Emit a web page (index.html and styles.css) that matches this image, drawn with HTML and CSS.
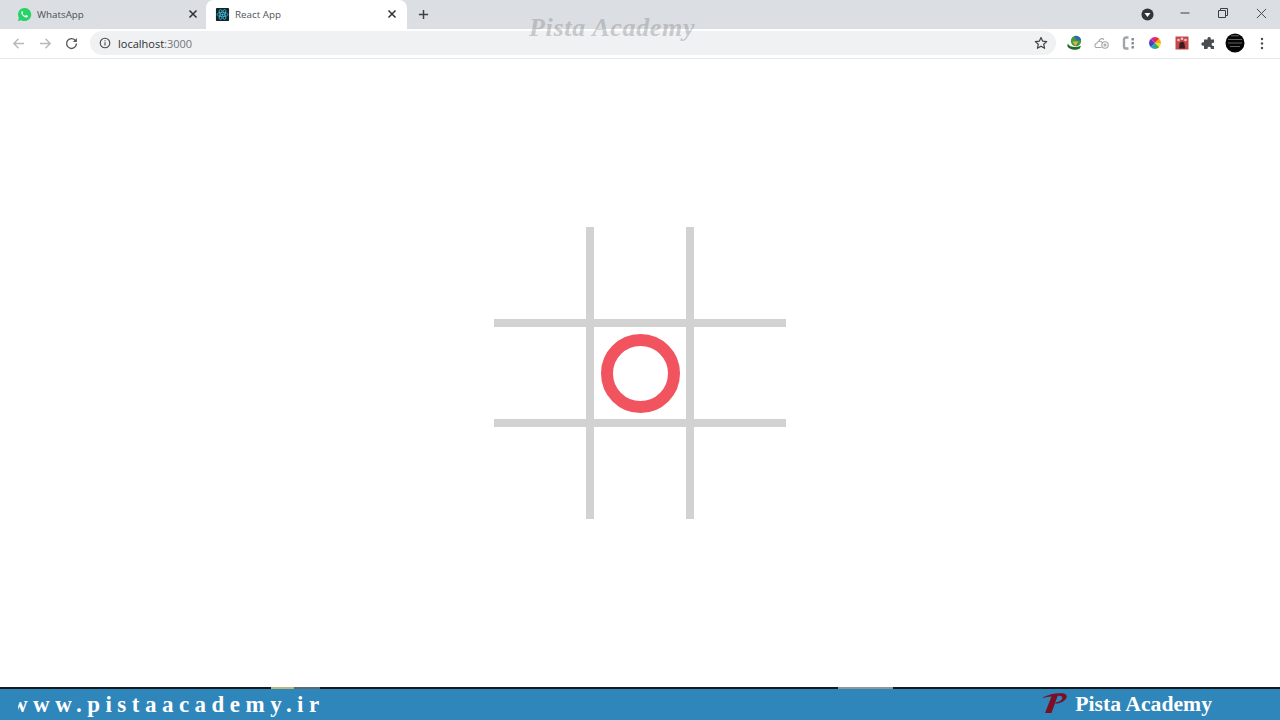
FILE: index.html
```html
<!DOCTYPE html>
<html lang="en">
<head>
<meta charset="utf-8">
<title>React App</title>
<link rel="stylesheet" href="styles.css">
</head>
<body>
<div class="page">
  <header class="chrome">
    <div class="tabstrip">
      <div class="tab">
        <svg class="favicon" viewBox="0 0 16 16"><path fill="#25d366" d="M8 1a7 7 0 0 0-6 10.500L1 15l3.600-1A7 7 0 1 0 8 1z"/><path fill="#fff" d="M5.700 4.200c-.3 0-.8.300-1 .8-.4 1 0 2.300 1 3.500 1.100 1.400 2.500 2.400 3.900 2.600.9.100 1.700-.4 1.900-1.100.1-.4.100-.7 0-.8l-1.600-.8c-.2-.1-.3 0-.4.100l-.6.800c-.1.100-.3.100-.4.100-1-.4-2-1.200-2.500-2.200-.1-.2 0-.3.100-.4l.4-.5c.1-.2.100-.3 0-.5l-.6-1.400c-.1-.2-.2-.2-.4-.2z"/></svg>
        <span class="tab-title">WhatsApp</span>
        <svg class="tab-close" viewBox="0 0 10 10"><path d="M1.500 1.500l7 7M8.500 1.500l-7 7"/></svg>
      </div>
      <div class="tab tab-active">
        <svg class="favicon" viewBox="0 0 16 16"><rect x="1" y="1" width="14" height="14" rx="1" fill="#10252c"/><g fill="none" stroke="#49c6e0" stroke-width=".8"><ellipse cx="8" cy="8" rx="5.800" ry="2.300"/><ellipse cx="8" cy="8" rx="5.800" ry="2.300" transform="rotate(60 8 8)"/><ellipse cx="8" cy="8" rx="5.800" ry="2.300" transform="rotate(120 8 8)"/></g><circle cx="8" cy="8" r="1.200" fill="#49c6e0"/></svg>
        <span class="tab-title">React App</span>
        <svg class="tab-close" viewBox="0 0 10 10"><path d="M1.500 1.500l7 7M8.500 1.500l-7 7"/></svg>
      </div>
      <svg class="new-tab" viewBox="0 0 12 12"><path d="M6 1v10M1 6h10"/></svg>
      <div class="window-controls">
        <svg class="profile-down" viewBox="0 0 14 14"><circle cx="7" cy="7" r="6.500" fill="#32363a"/><path d="M3.800 5.500h6.400L7 9.800z" fill="#fff"/></svg>
        <svg class="win-min" viewBox="0 0 10 10"><path d="M.5 5h9"/></svg>
        <svg class="win-max" viewBox="0 0 10 10"><path d="M.5 2.500h7v7h-7zM2.500 2.500v-2h7v7h-2"/></svg>
        <svg class="win-close" viewBox="0 0 12 12"><path d="M1 1l10 10M11 1L1 11"/></svg>
      </div>
    </div>
    <div class="toolbar">
      <div class="nav">
        <svg class="nav-icon nav-off" viewBox="0 0 14 14"><path d="M13 7H2M7 2L2 7l5 5"/></svg>
        <svg class="nav-icon nav-off" viewBox="0 0 14 14"><path d="M1 7h11M7 2l5 5-5 5"/></svg>
        <svg class="nav-icon" viewBox="0 0 14 14"><path d="M11.500 4.200A5.300 5.300 0 1 0 12.300 7"/><path class="solid" d="M12.800 1v4.300H8.500z"/></svg>
      </div>
      <div class="omnibox">
        <svg class="info" viewBox="0 0 12 12"><circle cx="6" cy="6" r="4.800"/><path d="M6 5.300v3.200M6 3.300v1"/></svg>
        <span class="url">localhost<span class="url-port">:3000</span></span>
        <svg class="star" viewBox="0 0 14 14"><path d="M7 1.500l1.700 3.700 4 .4-3 2.700.9 4L7 10.200l-3.600 2.100.9-4-3-2.700 4-.4z"/></svg>
      </div>
      <div class="actions">
        <span class="action"><svg viewBox="0 0 16 16" class="ext"><circle cx="9" cy="6" r="5.200" fill="#3e9a45"/><path d="M7 1.200a5.200 5.200 0 0 1 7 4l-4 .3-1.500-2.500z" fill="#2f66b8"/><path d="M.8 8.500c1.500 3.500 7.500 4.800 13.200 2.300l-1.200 2.700c-4 2.200-10.500 1.700-12.500-2.500z" fill="#1f6a27"/><path d="M5.500 6.500h6L8.300 11z" fill="#e3b437"/></svg></span>
        <span class="action"><svg viewBox="0 0 16 16" class="ext"><g fill="none" stroke="#a3a6a9" stroke-width="1.100"><circle cx="11" cy="10" r="3.200"/><circle cx="11" cy="10" r="1"/><path d="M8.500 8a3 3 0 0 0-5.500 0 2.500 2.500 0 0 0-1 4.500h5.500M5 6a3 3 0 0 1 5-1.500"/></g></svg></span>
        <span class="action"><svg viewBox="0 0 16 16" class="ext"><path d="M7.500 2.500H5a2 2 0 0 0-2 2v7a2 2 0 0 0 2 2h2.500" fill="none" stroke="#a2a5a8" stroke-width="2.400"/><rect x="10.500" y="3" width="2.400" height="2.500" fill="#85888b"/><rect x="10.500" y="7" width="2.400" height="2.500" fill="#85888b"/><rect x="10.500" y="11" width="2.400" height="2.500" fill="#85888b"/></svg></span>
        <span class="action"><svg viewBox="0 0 16 16" class="ext"><path d="M8 8V2a6 6 0 0 1 4.200 1.800z" fill="#e5332a"/><path d="M8 8l4.200-4.200A6 6 0 0 1 14 8z" fill="#f5a623"/><path d="M8 8h6a6 6 0 0 1-1.800 4.200z" fill="#f5e31f"/><path d="M8 8l4.200 4.200A6 6 0 0 1 8 14z" fill="#3cb043"/><path d="M8 8v6a6 6 0 0 1-4.200-1.800z" fill="#1fa6c9"/><path d="M8 8l-4.200 4.200A6 6 0 0 1 2 8z" fill="#2b4fc7"/><path d="M8 8H2a6 6 0 0 1 1.800-4.200z" fill="#7a2fb5"/><path d="M8 8L3.800 3.800A6 6 0 0 1 8 2z" fill="#d6249f"/></svg></span>
        <span class="action"><svg viewBox="0 0 16 16" class="ext"><rect x="1.500" y="1.500" width="13" height="13" fill="#c5484a"/><path d="M5 13.500l.6-5.500 2.200-1.500 2.400 1 1 6z" fill="#3a1c1e"/><circle cx="4.500" cy="5" r="1.300" fill="#f0c9c9"/><circle cx="8" cy="3.800" r="1.300" fill="#f0c9c9"/><circle cx="11.500" cy="5" r="1.300" fill="#f0c9c9"/></svg></span>
        <span class="action"><svg viewBox="0 0 16 16" class="ext"><path fill="#4a4d50" d="M6.500 3.300a1.700 1.700 0 0 1 3.300 0V4.500H13v3.200h-1.100a1.700 1.700 0 0 0 0 3.300H13V14H9.800v-1a1.700 1.700 0 0 0-3.300 0v1H3v-3.300H2a1.700 1.700 0 0 1 0-3.400h1V4.500h3.500z"/></svg></span>
        <span class="action"><svg viewBox="0 0 20 20" class="avatar"><circle cx="10" cy="10" r="9.500" fill="#050505"/><path d="M6 2.800h8M3 6.500h14M3 10h14M5 13.500h10" stroke="#8d8d8d" stroke-width=".7"/></svg></span>
        <span class="action"><svg viewBox="0 0 4 14" class="kebab"><circle cx="2" cy="2.200" r="1.300"/><circle cx="2" cy="7" r="1.300"/><circle cx="2" cy="11.800" r="1.300"/></svg></span>
      </div>
    </div>
  </header>
  <span class="watermark">Pista Academy</span>
  <main class="content">
    <div class="board">
      <div class="cell"></div><div class="cell"></div><div class="cell"></div>
      <div class="cell"></div><div class="cell"><div class="ring"></div></div><div class="cell"></div>
      <div class="cell"></div><div class="cell"></div><div class="cell"></div>
    </div>
  </main>
  <footer class="banner">
    <span class="seek seek-yellow"></span>
    <span class="seek seek-faint"></span>
    <span class="seek seek-grey"></span>
    <span class="site"><span class="site-text">www.pistaacademy.ir</span></span>
    <div class="brand">
      <svg class="brand-logo" viewBox="0 0 24 20"><path fill="#7d0f24" d="M0 4.500C5 1.500 13 0 19 .3c4 .2 5.500 2 4.500 4.500-1.300 3.300-6 5.700-11.500 6l1.200-1.600c3.300-.5 5.600-2 6.100-4 .3-1.300-.5-2.100-2.200-2.300-.8-.1-1.700-.1-2.500 0L8.500 20H2L8.500 3.500C5.500 3.700 2.500 4.300 0 5.200z"/></svg>
      <span class="brand-name">Pista Academy</span>
    </div>
  </footer>
</div>
</body>
</html>
```
FILE: styles.css
```css
* { box-sizing: border-box; }
html, body { margin: 0; height: 100%; overflow: hidden; background: #fff; }
svg { display: block; flex: none; }

.page {
  position: relative;
  width: 1280px;
  height: 720px;
  display: flex;
  flex-direction: column;
  font-family: "Open Sans", "Liberation Sans", sans-serif;
}

/* Browser chrome */
.chrome { flex: none; }
.tabstrip {
  height: 29px;
  background: #dbdfe3;
  display: flex;
  align-items: center;
  padding-left: 8px;
}
.tab {
  width: 198px;
  height: 29px;
  display: flex;
  align-items: center;
  padding: 0 8px 1px 9px;
  font-size: 9.800px;
  color: #4b4f53;
}
.tab-active {
  width: 201px;
  background: #fff;
  border-radius: 8px 8px 0 0;
  padding: 0 10px 1px 9px;
  color: #50545a;
}
.favicon { width: 15px; height: 15px; margin-right: 5px; }
.tab-title { flex: 1; white-space: nowrap; }
.tab-close { width: 10px; height: 10px; }
.tab-close path { stroke: #2c2f33; stroke-width: 1.500; fill: none; }
.new-tab { width: 11px; height: 11px; margin-left: 11px; }
.new-tab path { stroke: #3d4043; stroke-width: 1.600; fill: none; }

.window-controls {
  margin-left: auto;
  display: flex;
  align-items: center;
  padding-right: 13px;
}
.profile-down { width: 13px; height: 13px; margin-right: 26px; }
.win-min { width: 10px; height: 10px; margin-right: 28px; margin-top: -4px; }
.win-max { width: 10px; height: 10px; margin-right: 28px; margin-top: -3px; }
.win-close { width: 11px; height: 11px; margin-top: -3px; }
.win-min path, .win-max path, .win-close path { stroke: #3d4043; stroke-width: 1; fill: none; }

.toolbar {
  height: 30px;
  background: #fff;
  border-bottom: 1px solid #e6e8ea;
  display: flex;
  align-items: center;
  padding: 0 4.670px 1px 5px;
}
.nav { display: flex; align-items: center; }
.nav-icon { width: 13px; height: 13px; margin: 0 7px; }
.nav-icon:last-child { margin-left: 6px; margin-right: 8px; }
.nav-icon path { stroke: #55585b; stroke-width: 1.500; fill: none; }
.nav-icon path.solid { fill: #55585b; stroke: none; }
.nav-off path { stroke: #b6b9bc; }
.nav + .omnibox { margin-left: 4px; }
.omnibox {
  flex: 1;
  height: 24px;
  background: #eff1f2;
  border-radius: 12px;
  display: flex;
  align-items: center;
  padding: 0 8px 0 9px;
}
.info { width: 12px; height: 12px; margin-right: 7px; }
.info circle, .info path { stroke: #45484b; stroke-width: 1.100; fill: none; }
.url { flex: 1; font-size: 11px; color: #2c2f33; }
.url-port { color: #72767a; }
.star { width: 14px; height: 14px; }
.star path { stroke: #3f4245; stroke-width: 1.200; fill: none; stroke-linejoin: round; }
.actions { display: flex; margin-left: 6px; }
.action {
  width: 26.670px;
  display: flex;
  align-items: center;
  justify-content: center;
}
.ext { width: 16px; height: 16px; }
.avatar { width: 20px; height: 20px; }
.kebab { width: 4px; height: 13px; fill: #4a4d50; }

.watermark {
  position: absolute;
  left: 529px;
  top: 13px;
  font-family: "Liberation Serif", serif;
  font-weight: 700;
  font-style: italic;
  font-size: 26px;
  letter-spacing: .7px;
  color: rgba(130, 134, 138, .4);
  white-space: nowrap;
}

/* Game board */
.content {
  flex: 1;
  display: flex;
  align-items: center;
  justify-content: center;
  background: #fff;
}
.board {
  display: grid;
  grid-template-columns: repeat(3, 92px);
  grid-template-rows: repeat(3, 92px);
  gap: 8px;
  background: #d2d2d2;
}
.cell {
  background: #fff;
  display: flex;
  align-items: center;
  justify-content: center;
}
.ring {
  width: 79px;
  height: 79px;
  border: 12.500px solid #f1545f;
  border-radius: 50%;
}

/* Video banner */
.banner {
  position: relative;
  flex: none;
  height: 33px;
  background: #2f86ba;
  border-top: 2px solid #15191c;
  display: flex;
  align-items: center;
  justify-content: space-between;
  padding: 0 68px 0 18px;
  color: #fff;
  font-family: "Liberation Serif", serif;
  font-weight: 700;
}
.seek { position: absolute; top: -2px; height: 2px; }
.seek-yellow { left: 271px; width: 23px; background: #b9b878; }
.seek-faint { left: 294px; width: 26px; background: #5a6a70; }
.seek-grey { left: 838px; width: 55px; background: #8f9698; }
.site { display: block; overflow: hidden; font-size: 23px; letter-spacing: 5.480px; white-space: nowrap; }
.site-text { display: block; margin-left: -7px; }
.brand { display: flex; align-items: center; gap: 8px; }
.brand-logo { width: 24px; height: 20px; margin-top: -4px; }
.brand-name { font-size: 21.700px; white-space: nowrap; }
```
